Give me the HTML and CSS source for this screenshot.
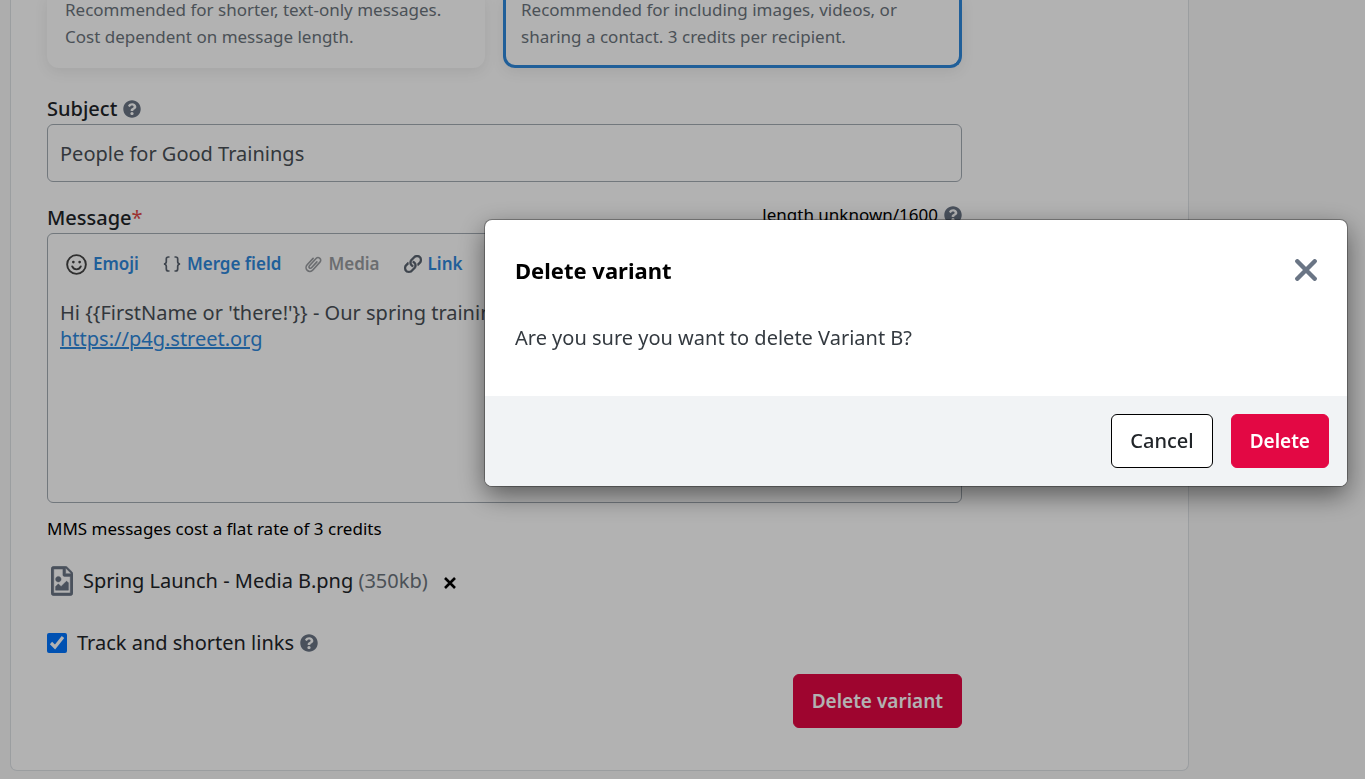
FILE: index.html
```html
<!DOCTYPE html>
<html lang="en">
<head>
  <meta charset="utf-8">
  <meta name="viewport" content="width=device-width, initial-scale=1">
  <title>Delete variant</title>
  <link rel="stylesheet" href="styles.css">
</head>
<body>

  <!-- Shared icons -->
  <svg class="sprite" aria-hidden="true">
    <symbol id="help" viewBox="0 0 512 512">
      <path fill="currentColor" d="M504 256c0 137-111 248-248 248S8 393 8 256C8 119.100 119 8 256 8s248 111.100 248 248zM262.700 90c-54.500 0-89.300 23-116.500 63.800-3.500 5.300-2.400 12.400 2.700 16.300l34.700 26.300c5.200 3.900 12.600 3 16.700-2.100 17.900-22.700 30.100-35.800 57.300-35.800 20.400 0 45.700 13.100 45.700 33 0 15-12.400 22.700-32.500 34C247.100 238.500 216 254.900 216 296v4c0 6.600 5.400 12 12 12h56c6.600 0 12-5.400 12-12v-1.300c0-28.500 83.200-29.600 83.200-106.700 0-58-60.200-102-116.500-102zM256 338c-25.400 0-46 20.600-46 46s20.600 46 46 46 46-20.600 46-46-20.600-46-46-46z"/>
    </symbol>
  </svg>

  <main class="page">
    <form class="card">
      <div class="options">
        <div class="option">
          Recommended for shorter, text-only messages.<br>
          Cost dependent on message length.
        </div>
        <div class="option selected">
          Recommended for including images, videos, or<br>
          sharing a contact. 3 credits per recipient.
        </div>
      </div>

      <div class="field">
        <div class="field-head">
          <label for="subject">Subject</label>
          <svg class="help"><use href="#help"/></svg>
        </div>
        <input class="subject" type="text" id="subject" value="People for Good Trainings">
      </div>

      <div class="field message">
        <div class="field-head">
          <span class="label" id="messageLabel">Message<span class="required">*</span></span>
          <span class="counter">length unknown/1600 <svg class="help"><use href="#help"/></svg></span>
        </div>
        <div class="editor">
          <div class="toolbar">
            <button type="button" class="tool">
              <svg class="icon-emoji" viewBox="0 0 22 22" fill="none" stroke="currentColor" stroke-width="2">
                <circle cx="11" cy="11" r="9.800"/>
                <path d="M6.500 13c1 2.200 2.600 3.100 4.500 3.100s3.500-.9 4.500-3.100" stroke-linecap="round"/>
                <circle cx="7.700" cy="8.500" r="1.400" fill="currentColor" stroke="none"/>
                <circle cx="14.300" cy="8.500" r="1.400" fill="currentColor" stroke="none"/>
              </svg>
              Emoji
            </button>
            <button type="button" class="tool">
              <svg class="icon-braces" viewBox="0 0 18 18" fill="none" stroke="currentColor" stroke-width="1.700">
                <path d="M6.500 2H5.300C3.800 2 3.300 2.800 3.300 4v2.700C3.300 8 2.800 8.700 1 9c1.800.3 2.300 1 2.300 2.300V14c0 1.200.5 2 2 2h1.200M11.500 2h1.200c1.500 0 2 .8 2 2v2.700c0 1.300.5 2 2.300 2.300-1.800.3-2.300 1-2.300 2.300V14c0 1.200-.5 2-2 2h-1.200"/>
              </svg>
              Merge field
            </button>
            <button type="button" class="tool" disabled>
              <svg class="icon-clip" viewBox="0 0 18 20" fill="none" stroke="currentColor" stroke-width="1.700" stroke-linecap="round">
                <path d="M12.600 7.200l-5.700 6.200c-.7.8-1.700.8-2.300.2s-.6-1.500.1-2.300l7-7.600c1.100-1.200 2.800-1.300 4-.2s1.200 2.800.1 4L8.300 15.900c-1.600 1.800-4.200 2-5.900.4s-1.700-4.200-.1-6L8.600 3.500"/>
              </svg>
              Media
            </button>
            <button type="button" class="tool">
              <svg class="icon-link" viewBox="0 0 512 512">
                <path fill="currentColor" stroke="currentColor" stroke-width="12" d="M314.222 197.780c51.091 51.091 54.377 132.287 9.750 187.160-6.242 7.730-2.784 3.865-84.940 86.020-54.696 54.696-143.266 54.745-197.990 0-54.711-54.690-54.734-143.255 0-197.990 32.773-32.773 51.835-51.899 63.409-63.457 7.463-7.452 20.331-2.354 20.486 8.192a173.310 173.310 0 0 0 4.746 37.828c.966 4.029-.272 8.269-3.202 11.198L80.632 312.570c-32.755 32.775-32.887 85.892 0 118.800 32.775 32.755 85.892 32.887 118.800 0l75.190-75.200c32.718-32.725 32.777-86.013 0-118.790a83.722 83.722 0 0 0-22.814-16.229c-4.623-2.233-7.182-7.250-6.561-12.346 1.356-11.122 6.296-21.885 14.815-30.405l4.375-4.375c3.625-3.626 9.177-4.594 13.760-2.294 12.999 6.524 25.187 15.211 36.025 26.049zM470.958 41.040c-54.724-54.745-143.294-54.696-197.990 0-82.156 82.156-78.698 78.290-84.940 86.020-44.627 54.873-41.341 136.069 9.750 187.160 10.838 10.838 23.026 19.525 36.025 26.049 4.582 2.300 10.134 1.331 13.760-2.294l4.375-4.375c8.520-8.519 13.459-19.283 14.815-30.405.621-5.096-1.938-10.113-6.561-12.346a83.706 83.706 0 0 1-22.814-16.229c-32.777-32.777-32.718-86.065 0-118.790l75.190-75.200c32.908-32.887 86.025-32.755 118.800 0 32.887 32.908 32.755 86.025 0 118.800l-45.848 45.840c-2.930 2.929-4.168 7.169-3.202 11.198a173.310 173.310 0 0 1 4.746 37.828c.155 10.546 13.023 15.644 20.486 8.192 11.574-11.558 30.636-30.684 63.409-63.457 54.733-54.735 54.710-143.300-.001-197.991z"/>
              </svg>
              Link
            </button>
          </div>
          <div class="editor-text" role="textbox" aria-multiline="true" aria-labelledby="messageLabel" contenteditable="true" spellcheck="false">Hi {{FirstName or 'there!'}} - Our spring training<br><a href="https://p4g.street.org">https://p4g.street.org</a></div>
        </div>
        <p class="cost">MMS messages cost a flat rate of 3 credits</p>
      </div>

      <div class="attachment">
        <svg class="icon-file" viewBox="0 0 384 512">
          <path fill="currentColor" stroke="currentColor" stroke-width="8" d="M369.900 97.980L286.020 14.100c-9-9-21.200-14.100-33.890-14.100H47.990C21.500.1 0 21.600 0 48.090v415.920C0 490.500 21.500 512 47.990 512h288.020c26.490 0 47.990-21.500 47.990-47.990V131.970c0-12.690-5.100-24.990-14.100-33.990zM256.030 32.590c2.800.7 5.300 2.100 7.400 4.200l83.880 83.880c2.100 2.100 3.500 4.600 4.200 7.400h-95.480V32.590zM336 464H48V48h160v104c0 13.300 10.700 24 24 24h104v288zM80 416h224V288l-23.500-23.500c-4.700-4.700-12.300-4.700-17 0L176 352l-39.500-39.500c-4.700-4.700-12.300-4.700-17 0L80 352v64zm48-240c-26.500 0-48 21.500-48 48s21.500 48 48 48 48-21.500 48-48-21.500-48-48-48z"/>
        </svg>
        <span>Spring Launch - Media B.png <span class="size">(350kb)</span></span>
        <button type="button" class="remove" aria-label="Remove file">
          <svg viewBox="0 0 12 12" fill="none" stroke="currentColor" stroke-width="2.600"><path d="M1 1l10 10M11 1L1 11"/></svg>
        </button>
      </div>

      <div class="track">
        <input type="checkbox" id="track" checked>
        <label for="track">Track and shorten links</label>
        <svg class="help"><use href="#help"/></svg>
      </div>

      <div class="card-actions">
        <button type="button" class="btn btn-danger">Delete variant</button>
      </div>
    </form>
  </main>

  <div class="backdrop"></div>

  <div class="modal" role="dialog" aria-modal="true" aria-labelledby="modalTitle">
    <div class="modal-header">
      <h2 id="modalTitle">Delete variant</h2>
      <button type="button" class="close" aria-label="Close">
        <svg viewBox="0 0 22 22" fill="none" stroke="currentColor" stroke-width="4.400" stroke-linecap="round"><path d="M2.300 2.300l17.400 17.400M19.700 2.300L2.300 19.700"/></svg>
      </button>
    </div>
    <p class="modal-body">Are you sure you want to delete Variant B?</p>
    <div class="modal-footer">
      <button type="button" class="btn btn-outline">Cancel</button>
      <button type="button" class="btn btn-danger">Delete</button>
    </div>
  </div>

</body>
</html>
```
FILE: styles.css
```css
* {
  box-sizing: border-box;
}

body {
  margin: 0;
  font-family: "Segoe UI", "Noto Sans", sans-serif;
  font-size: 20px;
  line-height: 30px;
  color: #212529;
  background: #f8f8f8;
  overflow: hidden;
}

button, input {
  font: inherit;
}

svg {
  display: block;
  flex: none;
}

.sprite {
  display: none;
}

.page {
  padding: 0 176px 8px 10px;
}

.card {
  margin-top: -4px;
  padding: 0 226px 42px 36px;
  background: #fff;
  border: 1px solid #dee2e6;
  border-top: 0;
  border-radius: 0 0 7px 7px;
}

/* Message type cards */
.options {
  display: grid;
  grid-template-columns: 438fr 459fr;
  gap: 18px;
  margin-bottom: 26px;
  font-size: 17px;
  line-height: 27px;
  color: #6c757d;
}

.option {
  padding: 0 18px 18px;
  white-space: nowrap;
  border-radius: 0 0 12px 12px;
  box-shadow: 0 4px 14px rgba(0, 0, 0, 0.08);
}

.option.selected {
  padding: 0 15px 15px;
  border: 3px solid #2f88dc;
  border-top: 0;
}

/* Form fields */
.field-head {
  display: flex;
  align-items: center;
  gap: 6px;
  font-weight: 500;
}

.help {
  width: 18px;
  height: 18px;
  color: #6a7585;
}

.required {
  font-weight: 400;
  color: #e04a48;
}

.subject {
  display: block;
  width: 100%;
  height: 58px;
  padding: 0 12px;
  color: #495057;
  background: #fff;
  border: 1px solid #a4acb4;
  border-radius: 6px;
}

.message {
  margin-top: 21px;
}

.counter {
  display: flex;
  align-items: center;
  gap: 6px;
  margin-left: auto;
  font-size: 17px;
  line-height: 24px;
  font-weight: 400;
  align-self: flex-start;
  color: #000;
}

.editor {
  min-height: 270px;
  padding: 12px;
  border: 1px solid #a4acb4;
  border-radius: 6px;
}

.toolbar {
  display: flex;
  gap: 24px;
  padding: 3px 6px;
}

.tool {
  display: flex;
  align-items: center;
  gap: 6px;
  padding: 0;
  font-size: 17px;
  line-height: 30px;
  font-weight: 600;
  color: #2f88dc;
  background: none;
  border: 0;
}

.tool svg {
  color: #5b6470;
}

.tool .icon-emoji {
  width: 21px;
  height: 21px;
  color: #444;
}

.icon-braces {
  width: 18px;
  height: 18px;
}

.icon-clip {
  width: 17px;
  height: 19px;
}

.icon-link {
  width: 18px;
  height: 18px;
}

.tool:disabled,
.tool:disabled svg {
  color: #9a9da1;
}

.editor-text {
  margin-top: 18px;
  line-height: 26px;
  color: #495057;
  outline: 0;
}

.editor-text a {
  color: #2f88dc;
}

.cost {
  margin: 13px 0 0;
  font-size: 17px;
  line-height: 26px;
  color: #000;
}

.attachment {
  display: flex;
  align-items: center;
  gap: 10px;
  margin-top: 24px;
  padding-left: 4px;
}

.icon-file {
  width: 22px;
  height: 30px;
  color: #6a7585;
}

.size {
  color: #6c757d;
}

.remove {
  margin-left: 6px;
  padding: 3px 0 0;
  background: none;
  border: 0;
  color: #000;
}

.remove svg {
  width: 12px;
  height: 12px;
}

.track {
  display: flex;
  align-items: center;
  gap: 6px;
  margin-top: 32px;
}

.track input {
  width: 20px;
  height: 20px;
  margin: 0 4px 0 0;
  accent-color: #0075ff;
}

.card-actions {
  display: flex;
  justify-content: flex-end;
  margin-top: 16px;
}

/* Buttons */
.btn {
  height: 54px;
  padding: 0 18px;
  border: 1px solid transparent;
  border-radius: 6px;
}

.btn-danger {
  font-size: 19px;
  font-weight: 600;
  color: #fff;
  background: #e30844;
  border-color: #e30844;
}

.btn-outline {
  font-weight: 500;
  color: #212529;
  background: #fff;
  border-color: #000;
}

/* Modal */
.backdrop {
  position: fixed;
  inset: 0;
  background: rgba(0, 0, 0, 0.3);
}

.modal {
  position: fixed;
  top: 220px;
  right: 18px;
  width: calc(100% - 503px);
  background: #fff;
  border-radius: 7px;
  box-shadow: 0 0 0 1px rgba(0, 0, 0, 0.3), 0 9px 27px rgba(0, 0, 0, 0.5);
  overflow: hidden;
}

.modal-header {
  display: flex;
  align-items: center;
  justify-content: space-between;
  padding: 35px 30px 0;
}

.modal-header h2 {
  margin: 0;
  font-size: 22px;
  line-height: 30px;
  color: #000;
}

.close {
  padding: 0;
  background: none;
  border: 0;
  color: #6a7585;
}

.close svg {
  width: 22px;
  height: 22px;
}

.modal-body {
  margin: 0;
  padding: 38px 30px 43px;
  color: #343a40;
}

.modal-footer {
  display: flex;
  justify-content: flex-end;
  gap: 18px;
  padding: 18px;
  background: #f1f3f5;
}
```
